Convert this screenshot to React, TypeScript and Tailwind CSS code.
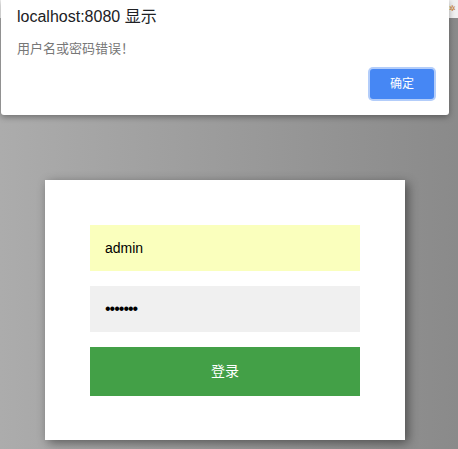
import React from "react";

export default function App() {
  const cjk = { fontFamily: '"Liberation Sans", "Noto Sans CJK SC", sans-serif' };
  return (
    <div className="relative w-[458px] h-[449px] overflow-hidden" style={cjk}>
      <div className="h-[18px] bg-[#f1f1f1] flex justify-end items-center pr-[2px]">
        <span className="text-[8px] leading-none text-[#c97c2a]">✲</span>
      </div>
      <div className="h-[431px] bg-gradient-to-r from-[#acacac] to-[#8a8a8a] pt-[162px] pl-[45px]">
        <div className="w-[360px] h-[260px] bg-white shadow-[3px_3px_10px_rgba(0,0,0,0.45)] px-[45px] pt-[45px] flex flex-col gap-[15px]">
          <div className="h-[46px] bg-[#faffbd] flex items-center pl-[15px] text-[14px] text-black">admin</div>
          <div className="h-[46px] bg-[#f0f0f0] flex items-center pl-[15px] text-[16px] text-black tracking-[-1px]">•••••••</div>
          <div className="h-[49px] bg-[#43a047] flex items-center justify-center text-[14px] text-white">登录</div>
        </div>
      </div>
      <div className="absolute left-[1px] top-0 w-[448px] h-[115px] bg-white rounded-b-[3px] shadow-[0_2px_6px_rgba(0,0,0,0.35)] flex flex-col">
        <div className="pl-[16px] pt-[6px] text-[16px] leading-[22px] text-[#202124]">localhost:8080 显示</div>
        <div className="pl-[16px] pt-[11px] text-[13px] leading-[17px] text-[#777777]" style={{ fontFamily: '"Noto Sans CJK SC", sans-serif' }}>用户名或密码错误！</div>
        <div className="flex justify-end pr-[15px] pt-[13px]">
          <div className="w-[64px] h-[30px] rounded-[3px] bg-[#4687f4] ring-2 ring-[#b3cdfa] flex items-center justify-center text-[12px] text-white">确定</div>
        </div>
      </div>
    </div>
  );
}
